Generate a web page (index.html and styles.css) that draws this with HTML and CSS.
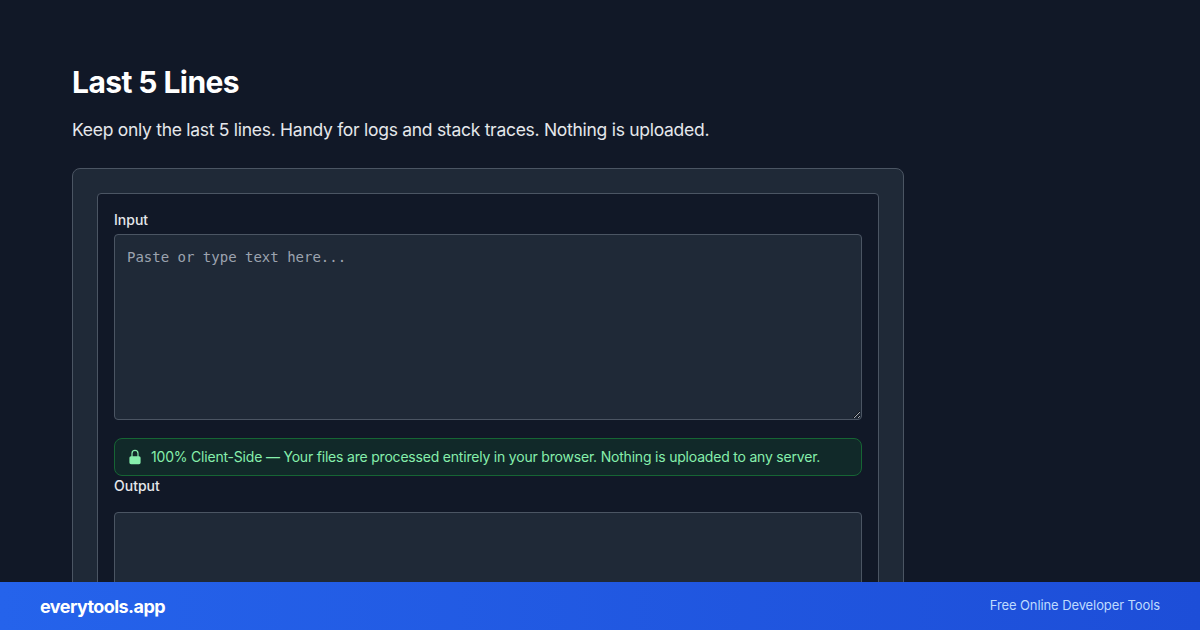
FILE: index.html
```html
<!DOCTYPE html>
<html lang="en">
<head>
<meta charset="utf-8">
<title>Last 5 Lines</title>
<link rel="stylesheet" href="styles.css">
</head>
<body>
<main class="page">
  <h1 class="title">Last 5 Lines</h1>
  <p class="lead">Keep only the last 5 lines. Handy for logs and stack traces. Nothing is uploaded.</p>
  <section class="card">
    <div class="panel">
      <label class="label label-input" for="input">Input</label>
      <textarea class="area area-input" id="input" placeholder="Paste or type text here..."></textarea>
      <div class="notice">
        <svg class="lock" viewBox="0 0 20 20" aria-hidden="true"><path fill-rule="evenodd" clip-rule="evenodd" d="M10 1a4.5 4.5 0 0 0-4.5 4.5V9H5a2 2 0 0 0-2 2v6a2 2 0 0 0 2 2h10a2 2 0 0 0 2-2v-6a2 2 0 0 0-2-2h-.5V5.5A4.5 4.5 0 0 0 10 1Zm3 8V5.5a3 3 0 1 0-6 0V9h6Z"/></svg>
        <span>100% Client-Side — Your files are processed entirely in your browser. Nothing is uploaded to any server.</span>
      </div>
      <label class="label label-output" for="output">Output</label>
      <textarea class="area area-output" id="output"></textarea>
    </div>
  </section>
</main>
<footer class="bar">
  <span class="brand">everytools.app</span>
  <span class="tagline">Free Online Developer Tools</span>
</footer>
</body>
</html>
```
FILE: styles.css
```css
* { box-sizing: border-box; }
html, body { height: 100%; }
body {
  margin: 0;
  background: #111827;
  color: #fff;
  font-family: Inter, "Liberation Sans", sans-serif;
  overflow: hidden;
  position: relative;
}
.page { width: 832px; margin-left: 72px; padding-top: 64px; }
.title { margin: 0; font-size: 30px; line-height: 36px; font-weight: 700; letter-spacing: -0.58px; }
.lead { margin: 16px 0 0; font-size: 17.5px; line-height: 28px; letter-spacing: -0.28px; color: #e5e7eb; }
.card {
  margin-top: 24px;
  padding: 24px;
  background: #1f2937;
  border: 1px solid #4b5563;
  border-radius: 8px;
}
.panel {
  padding: 16px;
  background: #111827;
  border: 1px solid #4b5563;
  border-radius: 4px;
}
.label { display: block; font-size: 14px; line-height: 20px; font-weight: 500; color: #e5e7eb; }
.label-input { margin-bottom: 4px; }
.label-output { margin-bottom: 16px; }
.area {
  display: block;
  width: 100%;
  padding: 12px;
  background: #1f2937;
  border: 1px solid #4b5563;
  border-radius: 4px;
  color: #f3f4f6;
  font-family: "DejaVu Sans Mono", "Liberation Mono", monospace;
  font-size: 14px;
  line-height: 20px;
  outline: none;
}
.area::placeholder { color: #9ca3af; opacity: 1; }
.area-input { height: 186px; resize: vertical; }
.area-output { height: 186px; resize: none; }
.notice {
  display: flex;
  align-items: center;
  gap: 8px;
  height: 38px;
  margin-top: 18px;
  padding: 0 12px;
  background: rgba(20, 83, 45, 0.3);
  border: 1px solid #166534;
  border-radius: 8px;
  color: #86efac;
  font-size: 14px;
  line-height: 20px;
  letter-spacing: -0.2px;
}
.lock { width: 16px; height: 16px; flex: none; fill: currentColor; }
.bar {
  position: absolute;
  left: 0;
  right: 0;
  bottom: 0;
  height: 48px;
  display: flex;
  align-items: center;
  justify-content: space-between;
  padding: 0 40px;
  background: linear-gradient(90deg, #2563eb, #1d4ed8);
}
.brand { padding-top: 2px; font-size: 18px; line-height: 28px; font-weight: 700; letter-spacing: -0.57px; color: #fff; }
.tagline { padding-bottom: 2px; font-size: 13px; line-height: 20px; letter-spacing: -0.1px; color: #bfdbfe; }
```
